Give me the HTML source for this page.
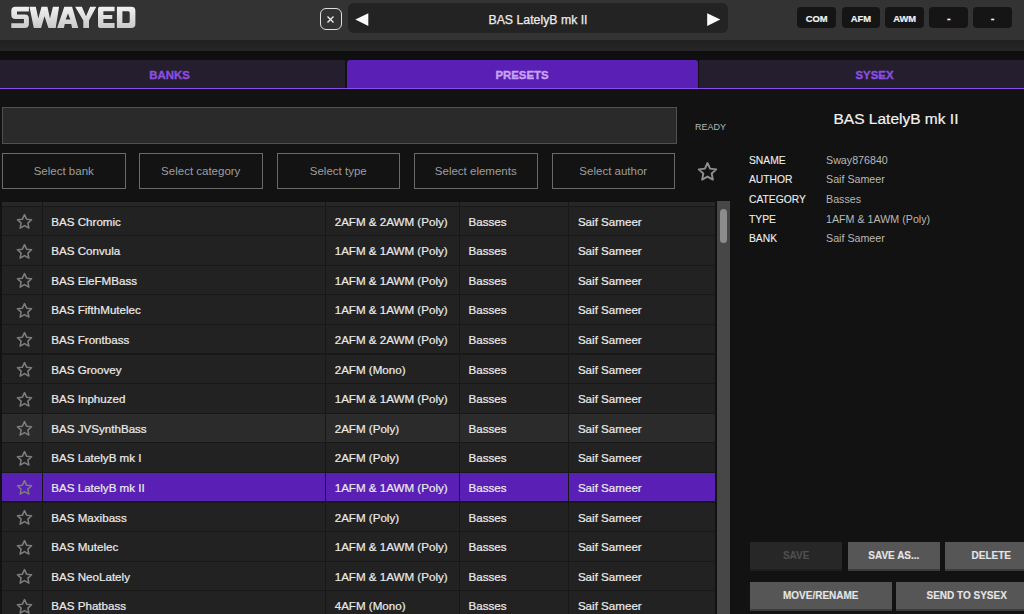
<!DOCTYPE html>
<html><head><meta charset="utf-8">
<style>
*{margin:0;padding:0;box-sizing:border-box}
html,body{width:1024px;height:614px;overflow:hidden;background:#121212;font-family:"Liberation Sans",sans-serif;color:#e8e8e8}
.abs{position:absolute}
#top{position:absolute;left:0;top:0;width:1024px;height:40px;background:#333}
#band{position:absolute;left:0;top:40px;width:1024px;height:11px;background:linear-gradient(#202020,#262626)}
#blk{position:absolute;left:0;top:51px;width:1024px;height:9px;background:#0f0f0f}
#logo{position:absolute;left:10px;top:2px;font:bold 29px "Liberation Sans",sans-serif;letter-spacing:0px;color:#e6e6e6;transform:scaleX(1.0);transform-origin:left top}
#xbtn{position:absolute;left:320.2px;top:8.3px;width:21.4px;height:21.6px;border:1.8px solid #dedede;border-radius:6px}
#nav{position:absolute;left:348px;top:3.2px;width:379.6px;height:29.5px;background:#232323;border-radius:6px}
#navt{position:absolute;left:348px;top:4.6px;width:380px;height:31px;line-height:31px;text-align:center;font-size:12.3px;color:#f0f0f0;-webkit-text-stroke:0.25px #e8e8e8}
.tb{position:absolute;top:7px;height:21.3px;width:38.7px;background:#151515;border-radius:4px;color:#f2f2f2;font:bold 9.4px "Liberation Sans",sans-serif;line-height:23.5px;-webkit-text-stroke:0.2px #eee;text-align:center}
.tab{position:absolute;top:60px;height:27.5px;background:#251e2f;color:#8a4ee0;font:bold 11.4px "Liberation Sans",sans-serif;line-height:30.2px;text-align:center;-webkit-text-stroke:0.35px currentColor}
.tab.act{background:#5a1fb4;color:#c7a3f7;border-radius:3px 3px 0 0}
#tline{position:absolute;left:0;top:87.5px;width:1024px;height:1.8px;background:#8a4ee8}
#search{position:absolute;left:2px;top:106.8px;width:674.5px;height:36.8px;background:#2a2a2a;border:1px solid #505050}
#ready{position:absolute;left:695px;top:121.5px;font-size:9px;color:#b8b8b8}
.sel-box{position:absolute;top:153px;height:35.5px;width:123.5px;border:1px solid #6a6a6a;background:#131313;color:#9e9e9e;font-size:11.5px;line-height:35px;text-align:center}
#table{position:absolute;left:2px;top:201.5px;width:712.5px;height:413px;background:#181818;overflow:hidden}
#thead{position:absolute;left:0;top:0;width:712.5px;height:3.8px;background:#262626}
.row{position:absolute;left:2px;width:712.5px;height:29.6px;}
.row .c{position:absolute;top:0;height:28.6px;background:#222;line-height:30.4px;font-size:11.6px;color:#ececec;white-space:nowrap;padding-left:8.3px;-webkit-text-stroke:0.22px #e6e6e6}
.row.hd .c{height:4.4px;background:#272727}
.row.hov .c{background:#2b2b2b}
.row.sel .c{background:#5a1fb4}
.c0{left:0;width:39.5px;padding-left:0 !important}
.c1{left:40.5px;width:282.5px;padding-left:8.8px !important}
.c2{left:324px;width:133px;padding-left:8.7px !important}
.c3{left:458px;width:108px;padding-left:8.5px !important}
.c4{left:567px;width:145.5px;padding-left:8.9px !important}
.st{position:absolute;left:14px;top:6.6px}
#sbt{position:absolute;left:717px;top:201px;width:13px;height:413px;background:#474747}
#thumb{position:absolute;left:720px;top:208.7px;width:7.2px;height:34.7px;background:#8c8c8c;border-radius:4px}
#ptitle{position:absolute;left:730px;top:110px;width:332px;text-align:center;font-size:15.5px;color:#f2f2f2;-webkit-text-stroke:0.2px #eee}
.lab{position:absolute;left:749px;font-size:10.3px;color:#f0f0f0;-webkit-text-stroke:0.1px #e8e8e8}
.val{position:absolute;left:826px;font-size:10.7px;color:#b8b8b8}
.btn{position:absolute;height:28.6px;background:#565656;color:#e6e6e6;font:bold 10px "Liberation Sans",sans-serif;line-height:28px;text-align:center;box-shadow:inset 0 -2px 0 #3c3c3c;-webkit-text-stroke:0.15px #ddd}
.btn.dis{background:#272727;color:#505050;-webkit-text-stroke:0.15px #4a4a4a;box-shadow:inset 0 -2px 0 #1e1e1e}
</style></head><body>
<div id="top"></div><div id="band"></div><div id="blk"></div>
<svg class="abs" style="left:0;top:0" width="150" height="40" viewBox="0 0 150 40"><defs><linearGradient id="lg" x1="0" y1="6.6" x2="0" y2="28" gradientUnits="userSpaceOnUse"><stop offset="0" stop-color="#f2f2f2"/><stop offset="1" stop-color="#c9c9c9"/></linearGradient></defs><g fill="url(#lg)" fill-rule="evenodd" stroke="#2b2b2b" stroke-width="0.6" paint-order="stroke">
<path d="M15.3 6.65H28.9V11.4H17V14.6H25Q28.9 14.6 28.9 18.5V24Q28.9 27.9 25 27.9H11.3V23.3H23.9V19.1H15.3Q11.3 19.1 11.3 15.1V10.65Q11.3 6.65 15.3 6.65Z"/>
<path d="M29.4 6.65L35.8 6.65L38.3 18.5L41.5 6.65L47.4 6.65L50 18.5L52.9 6.65L59.1 6.65L55.7 27.9L48.4 27.9L44.5 16.2L41.1 27.9L33.8 27.9Z"/>
<path d="M64.3 6.65L72.1 6.65L78.3 27.9L72.1 27.9L71.2 24L64.8 24L63.9 27.9L57.1 27.9Z M68 13.5L70.3 19.6L65.7 19.6Z"/>
<path d="M75.1 6.65L81.9 6.65L86 16.2L90.1 6.65L96.3 6.65L89 20.5L89 27.9L83.3 27.9L83.3 20.5Z"/>
<path d="M100 6.65H114.6V11.2H103.4V15.1H112.3V18.9H103.4V23H114.6V27.9H100Q98 27.9 98 25.9V8.65Q98 6.65 100 6.65Z"/>
<path d="M116.9 6.65H131.4Q135.4 6.65 135.4 10.65V23.9Q135.4 27.9 131.4 27.9H116.9Z M122.4 11.2H128.2Q129.7 11.2 129.7 12.7V21.5Q129.7 23 128.2 23H122.4Z"/>
</g></svg>
<div id="xbtn"></div>
<svg class="abs" style="left:327.4px;top:15.8px" width="7" height="7" viewBox="0 0 7 7"><path d="M0.5 0.5L6.5 6.5M6.5 0.5L0.5 6.5" stroke="#f0f0f0" stroke-width="1.3"/></svg>
<div id="nav"></div>
<svg class="abs" style="left:355.2px;top:12.5px" width="14" height="14" viewBox="0 0 14 14"><path d="M0.3 6.6L13.3 0.2V13.1Z" fill="#fafafa"/></svg>
<svg class="abs" style="left:706.5px;top:12.5px" width="14" height="14" viewBox="0 0 14 14"><path d="M13.3 6.6L0.2 0.2V13.1Z" fill="#fafafa"/></svg>
<div id="navt">BAS LatelyB mk II</div>
<div class="tb" style="left:797.3px">COM</div>
<div class="tb" style="left:841.6px">AFM</div>
<div class="tb" style="left:885.4px">AWM</div>
<div class="tb" style="left:929.4px;font-size:11px">-</div>
<div class="tb" style="left:973.3px;font-size:11px">-</div>
<div class="tab" style="left:-6px;width:351px">BANKS</div>
<div class="tab act" style="left:346.5px;width:351px">PRESETS</div>
<div class="tab" style="left:699px;width:351px">SYSEX</div>
<div id="tline"></div>
<div id="search"></div>
<div id="ready">READY</div>
<div class="sel-box" style="left:2px">Select bank</div>
<div class="sel-box" style="left:139px">Select category</div>
<div class="sel-box" style="left:276.5px">Select type</div>
<div class="sel-box" style="left:414px">Select elements</div>
<div class="sel-box" style="left:551.5px">Select author</div>
<svg class="abs" style="left:696.6px;top:160.6px" width="21" height="21" viewBox="0 0 24 24"><path d="M12.00 2.30 L14.94 8.75 L21.99 9.56 L16.76 14.35 L18.17 21.29 L12.00 17.80 L5.83 21.29 L7.24 14.35 L2.01 9.56 L9.06 8.75Z" fill="none" stroke="#8e8e8e" stroke-width="2.2" stroke-linejoin="round"/></svg>
<div id="table"></div><div class="row hd" style="top:201.8px"><div class="c c0"></div><div class="c c1"></div><div class="c c2"></div><div class="c c3"></div><div class="c c4"></div></div>
<div class="row" style="top:206.50px"><div class="c c0"><svg class="st" width="17" height="17" viewBox="0 0 24 24"><path d="M12.00 2.30 L14.94 8.75 L21.99 9.56 L16.76 14.35 L18.17 21.29 L12.00 17.80 L5.83 21.29 L7.24 14.35 L2.01 9.56 L9.06 8.75Z" fill="none" stroke="#7d7d7d" stroke-width="2.2" stroke-linejoin="round"/></svg></div><div class="c c1">BAS Chromic</div><div class="c c2">2AFM &amp; 2AWM (Poly)</div><div class="c c3">Basses</div><div class="c c4">Saif Sameer</div></div>
<div class="row" style="top:236.10px"><div class="c c0"><svg class="st" width="17" height="17" viewBox="0 0 24 24"><path d="M12.00 2.30 L14.94 8.75 L21.99 9.56 L16.76 14.35 L18.17 21.29 L12.00 17.80 L5.83 21.29 L7.24 14.35 L2.01 9.56 L9.06 8.75Z" fill="none" stroke="#7d7d7d" stroke-width="2.2" stroke-linejoin="round"/></svg></div><div class="c c1">BAS Convula</div><div class="c c2">1AFM &amp; 1AWM (Poly)</div><div class="c c3">Basses</div><div class="c c4">Saif Sameer</div></div>
<div class="row" style="top:265.70px"><div class="c c0"><svg class="st" width="17" height="17" viewBox="0 0 24 24"><path d="M12.00 2.30 L14.94 8.75 L21.99 9.56 L16.76 14.35 L18.17 21.29 L12.00 17.80 L5.83 21.29 L7.24 14.35 L2.01 9.56 L9.06 8.75Z" fill="none" stroke="#7d7d7d" stroke-width="2.2" stroke-linejoin="round"/></svg></div><div class="c c1">BAS EleFMBass</div><div class="c c2">1AFM &amp; 1AWM (Poly)</div><div class="c c3">Basses</div><div class="c c4">Saif Sameer</div></div>
<div class="row" style="top:295.30px"><div class="c c0"><svg class="st" width="17" height="17" viewBox="0 0 24 24"><path d="M12.00 2.30 L14.94 8.75 L21.99 9.56 L16.76 14.35 L18.17 21.29 L12.00 17.80 L5.83 21.29 L7.24 14.35 L2.01 9.56 L9.06 8.75Z" fill="none" stroke="#7d7d7d" stroke-width="2.2" stroke-linejoin="round"/></svg></div><div class="c c1">BAS FifthMutelec</div><div class="c c2">1AFM &amp; 1AWM (Poly)</div><div class="c c3">Basses</div><div class="c c4">Saif Sameer</div></div>
<div class="row" style="top:324.90px"><div class="c c0"><svg class="st" width="17" height="17" viewBox="0 0 24 24"><path d="M12.00 2.30 L14.94 8.75 L21.99 9.56 L16.76 14.35 L18.17 21.29 L12.00 17.80 L5.83 21.29 L7.24 14.35 L2.01 9.56 L9.06 8.75Z" fill="none" stroke="#7d7d7d" stroke-width="2.2" stroke-linejoin="round"/></svg></div><div class="c c1">BAS Frontbass</div><div class="c c2">2AFM &amp; 2AWM (Poly)</div><div class="c c3">Basses</div><div class="c c4">Saif Sameer</div></div>
<div class="row" style="top:354.50px"><div class="c c0"><svg class="st" width="17" height="17" viewBox="0 0 24 24"><path d="M12.00 2.30 L14.94 8.75 L21.99 9.56 L16.76 14.35 L18.17 21.29 L12.00 17.80 L5.83 21.29 L7.24 14.35 L2.01 9.56 L9.06 8.75Z" fill="none" stroke="#7d7d7d" stroke-width="2.2" stroke-linejoin="round"/></svg></div><div class="c c1">BAS Groovey</div><div class="c c2">2AFM (Mono)</div><div class="c c3">Basses</div><div class="c c4">Saif Sameer</div></div>
<div class="row" style="top:384.10px"><div class="c c0"><svg class="st" width="17" height="17" viewBox="0 0 24 24"><path d="M12.00 2.30 L14.94 8.75 L21.99 9.56 L16.76 14.35 L18.17 21.29 L12.00 17.80 L5.83 21.29 L7.24 14.35 L2.01 9.56 L9.06 8.75Z" fill="none" stroke="#7d7d7d" stroke-width="2.2" stroke-linejoin="round"/></svg></div><div class="c c1">BAS Inphuzed</div><div class="c c2">1AFM &amp; 1AWM (Poly)</div><div class="c c3">Basses</div><div class="c c4">Saif Sameer</div></div>
<div class="row hov" style="top:413.70px"><div class="c c0"><svg class="st" width="17" height="17" viewBox="0 0 24 24"><path d="M12.00 2.30 L14.94 8.75 L21.99 9.56 L16.76 14.35 L18.17 21.29 L12.00 17.80 L5.83 21.29 L7.24 14.35 L2.01 9.56 L9.06 8.75Z" fill="none" stroke="#7d7d7d" stroke-width="2.2" stroke-linejoin="round"/></svg></div><div class="c c1">BAS JVSynthBass</div><div class="c c2">2AFM (Poly)</div><div class="c c3">Basses</div><div class="c c4">Saif Sameer</div></div>
<div class="row" style="top:443.30px"><div class="c c0"><svg class="st" width="17" height="17" viewBox="0 0 24 24"><path d="M12.00 2.30 L14.94 8.75 L21.99 9.56 L16.76 14.35 L18.17 21.29 L12.00 17.80 L5.83 21.29 L7.24 14.35 L2.01 9.56 L9.06 8.75Z" fill="none" stroke="#7d7d7d" stroke-width="2.2" stroke-linejoin="round"/></svg></div><div class="c c1">BAS LatelyB mk I</div><div class="c c2">2AFM (Poly)</div><div class="c c3">Basses</div><div class="c c4">Saif Sameer</div></div>
<div class="row sel" style="top:472.90px"><div class="c c0"><svg class="st" width="17" height="17" viewBox="0 0 24 24"><path d="M12.00 2.30 L14.94 8.75 L21.99 9.56 L16.76 14.35 L18.17 21.29 L12.00 17.80 L5.83 21.29 L7.24 14.35 L2.01 9.56 L9.06 8.75Z" fill="none" stroke="#7d7d7d" stroke-width="2.2" stroke-linejoin="round"/></svg></div><div class="c c1">BAS LatelyB mk II</div><div class="c c2">1AFM &amp; 1AWM (Poly)</div><div class="c c3">Basses</div><div class="c c4">Saif Sameer</div></div>
<div class="row" style="top:502.50px"><div class="c c0"><svg class="st" width="17" height="17" viewBox="0 0 24 24"><path d="M12.00 2.30 L14.94 8.75 L21.99 9.56 L16.76 14.35 L18.17 21.29 L12.00 17.80 L5.83 21.29 L7.24 14.35 L2.01 9.56 L9.06 8.75Z" fill="none" stroke="#7d7d7d" stroke-width="2.2" stroke-linejoin="round"/></svg></div><div class="c c1">BAS Maxibass</div><div class="c c2">2AFM (Poly)</div><div class="c c3">Basses</div><div class="c c4">Saif Sameer</div></div>
<div class="row" style="top:532.10px"><div class="c c0"><svg class="st" width="17" height="17" viewBox="0 0 24 24"><path d="M12.00 2.30 L14.94 8.75 L21.99 9.56 L16.76 14.35 L18.17 21.29 L12.00 17.80 L5.83 21.29 L7.24 14.35 L2.01 9.56 L9.06 8.75Z" fill="none" stroke="#7d7d7d" stroke-width="2.2" stroke-linejoin="round"/></svg></div><div class="c c1">BAS Mutelec</div><div class="c c2">1AFM &amp; 1AWM (Poly)</div><div class="c c3">Basses</div><div class="c c4">Saif Sameer</div></div>
<div class="row" style="top:561.70px"><div class="c c0"><svg class="st" width="17" height="17" viewBox="0 0 24 24"><path d="M12.00 2.30 L14.94 8.75 L21.99 9.56 L16.76 14.35 L18.17 21.29 L12.00 17.80 L5.83 21.29 L7.24 14.35 L2.01 9.56 L9.06 8.75Z" fill="none" stroke="#7d7d7d" stroke-width="2.2" stroke-linejoin="round"/></svg></div><div class="c c1">BAS NeoLately</div><div class="c c2">1AFM &amp; 1AWM (Poly)</div><div class="c c3">Basses</div><div class="c c4">Saif Sameer</div></div>
<div class="row" style="top:591.30px"><div class="c c0"><svg class="st" width="17" height="17" viewBox="0 0 24 24"><path d="M12.00 2.30 L14.94 8.75 L21.99 9.56 L16.76 14.35 L18.17 21.29 L12.00 17.80 L5.83 21.29 L7.24 14.35 L2.01 9.56 L9.06 8.75Z" fill="none" stroke="#7d7d7d" stroke-width="2.2" stroke-linejoin="round"/></svg></div><div class="c c1">BAS Phatbass</div><div class="c c2">4AFM (Mono)</div><div class="c c3">Basses</div><div class="c c4">Saif Sameer</div></div>
<div id="sbt"></div><div id="thumb"></div>
<div id="ptitle">BAS LatelyB mk II</div>
<div class="lab" style="top:155.2px">SNAME</div><div class="val" style="top:153.5px">Sway876840</div>
<div class="lab" style="top:174.2px">AUTHOR</div><div class="val" style="top:173px">Saif Sameer</div>
<div class="lab" style="top:194px">CATEGORY</div><div class="val" style="top:193px">Basses</div>
<div class="lab" style="top:214.2px">TYPE</div><div class="val" style="top:213px">1AFM &amp; 1AWM (Poly)</div>
<div class="lab" style="top:233.2px">BANK</div><div class="val" style="top:232px">Saif Sameer</div>
<div class="btn dis" style="left:750px;top:542px;width:92.4px">SAVE</div>
<div class="btn" style="left:848px;top:542px;width:91.6px">SAVE AS...</div>
<div class="btn" style="left:945.3px;top:542px;width:92px">DELETE</div>
<div class="btn" style="left:750px;top:582.3px;width:141.5px">MOVE/RENAME</div>
<div class="btn" style="left:896.2px;top:582.3px;width:141px">SEND TO SYSEX</div>
</body></html>
